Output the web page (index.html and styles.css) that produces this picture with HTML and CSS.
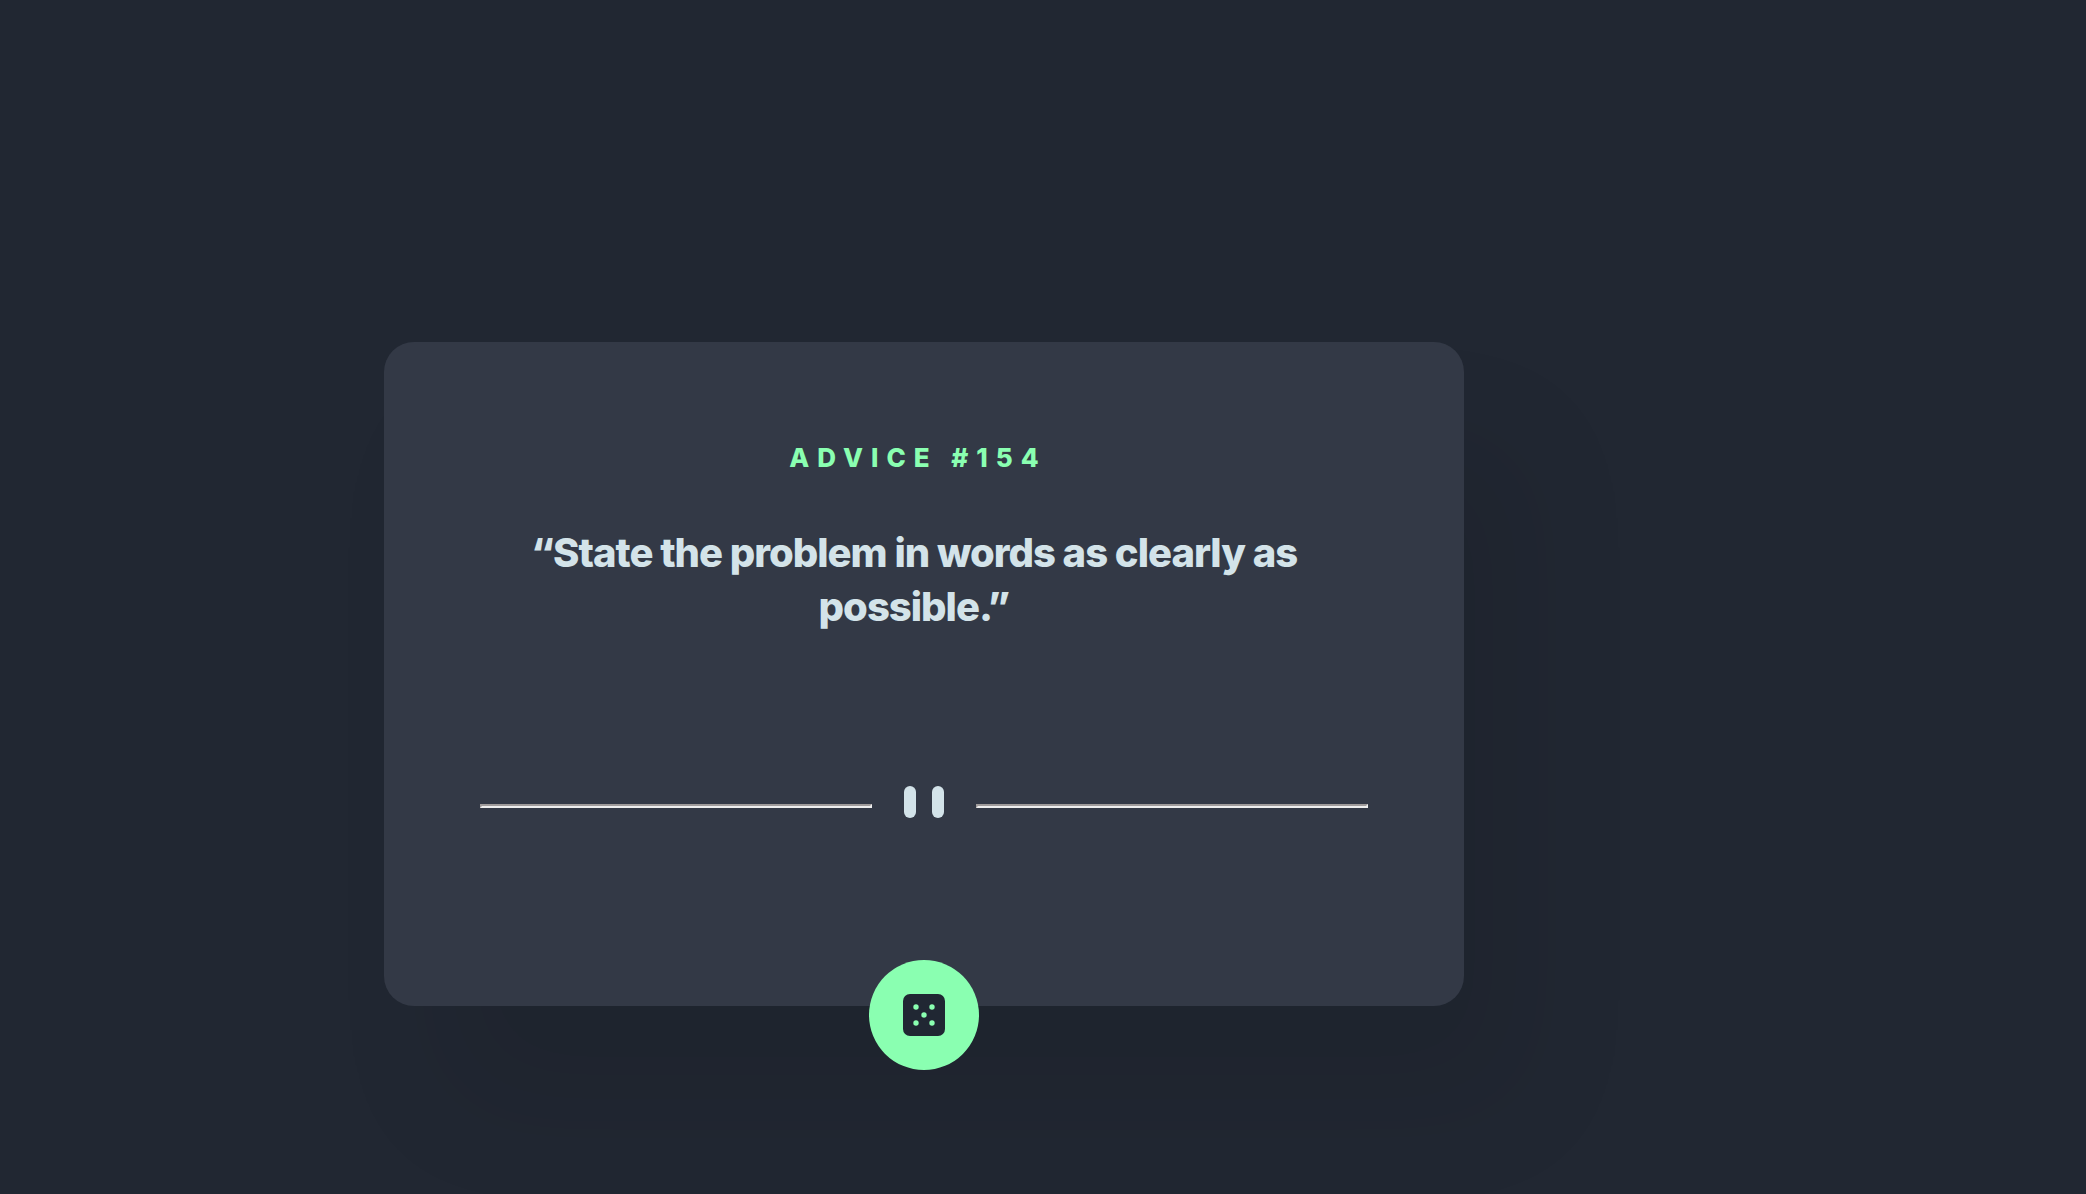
FILE: index.html
```html
<!DOCTYPE html>
<html lang="en">
<head>
<meta charset="utf-8">
<meta name="viewport" content="width=device-width, initial-scale=1">
<title>Advice generator</title>
<link rel="stylesheet" href="styles.css">
</head>
<body>
<main class="card">
  <h1 class="advice-id">Advice #154</h1>
  <p class="quote">“State the problem in words as clearly as possible.”</p>
  <div class="divider">
    <hr class="line">
    <span class="bar"></span>
    <span class="bar"></span>
    <hr class="line">
  </div>
  <button class="dice" type="button" aria-label="New advice">
    <svg width="42" height="42" viewBox="0 0 42 42" aria-hidden="true">
      <rect width="42" height="42" rx="7" fill="#202733"/>
      <g fill="#8affb1">
        <circle cx="13" cy="13" r="2.7"/>
        <circle cx="29" cy="13" r="2.7"/>
        <circle cx="21" cy="21" r="2.7"/>
        <circle cx="13" cy="29" r="2.7"/>
        <circle cx="29" cy="29" r="2.7"/>
      </g>
    </svg>
  </button>
</main>
</body>
</html>
```
FILE: styles.css
```css
* {
  box-sizing: border-box;
}

body {
  margin: 0;
  padding: 342px 0 124px;
  min-height: 100vh;
  overflow-x: hidden;
  background: #212732;
  font-family: Inter, "Liberation Sans", sans-serif;
}

.card {
  position: relative;
  display: flex;
  flex-direction: column;
  max-width: 1080px;
  min-height: 664px;
  margin-left: max(0px, calc(50% - 659px));
  padding: 96px;
  border-radius: 30px;
  background: #333946;
  box-shadow: 60px 100px 120px rgba(0, 0, 0, 0.08);
  text-align: center;
}

.advice-id {
  margin: 0;
  padding-right: 12px;
  color: #8affb1;
  font-size: 26px;
  font-weight: 800;
  line-height: 40px;
  letter-spacing: 8px;
  text-transform: uppercase;
}

.quote {
  margin: 48px 20px 0 0;
  padding: 0 40px;
  color: #d3e3e9;
  font-size: 40px;
  font-weight: 800;
  line-height: 54px;
  letter-spacing: -1px;
}

.divider {
  display: flex;
  align-items: center;
  gap: 16px;
  margin-top: 152px;
}

.line {
  flex: 1;
  height: 4px;
  margin: 8px 16px 0 0;
  border: 2px solid;
  border-color: #9f9b9b #eeeeee #eeeeee #9f9b9b;
}

.line:last-child {
  margin: 8px 0 0 16px;
}

.bar {
  width: 12px;
  height: 32px;
  border-radius: 6px;
  background: #d3e3e9;
}

.dice {
  position: absolute;
  bottom: -64px;
  left: 50%;
  display: grid;
  place-items: center;
  width: 110px;
  height: 110px;
  margin-left: -55px;
  padding: 0;
  border: 0;
  border-radius: 50%;
  background: #8affb1;
  cursor: pointer;
}
```
